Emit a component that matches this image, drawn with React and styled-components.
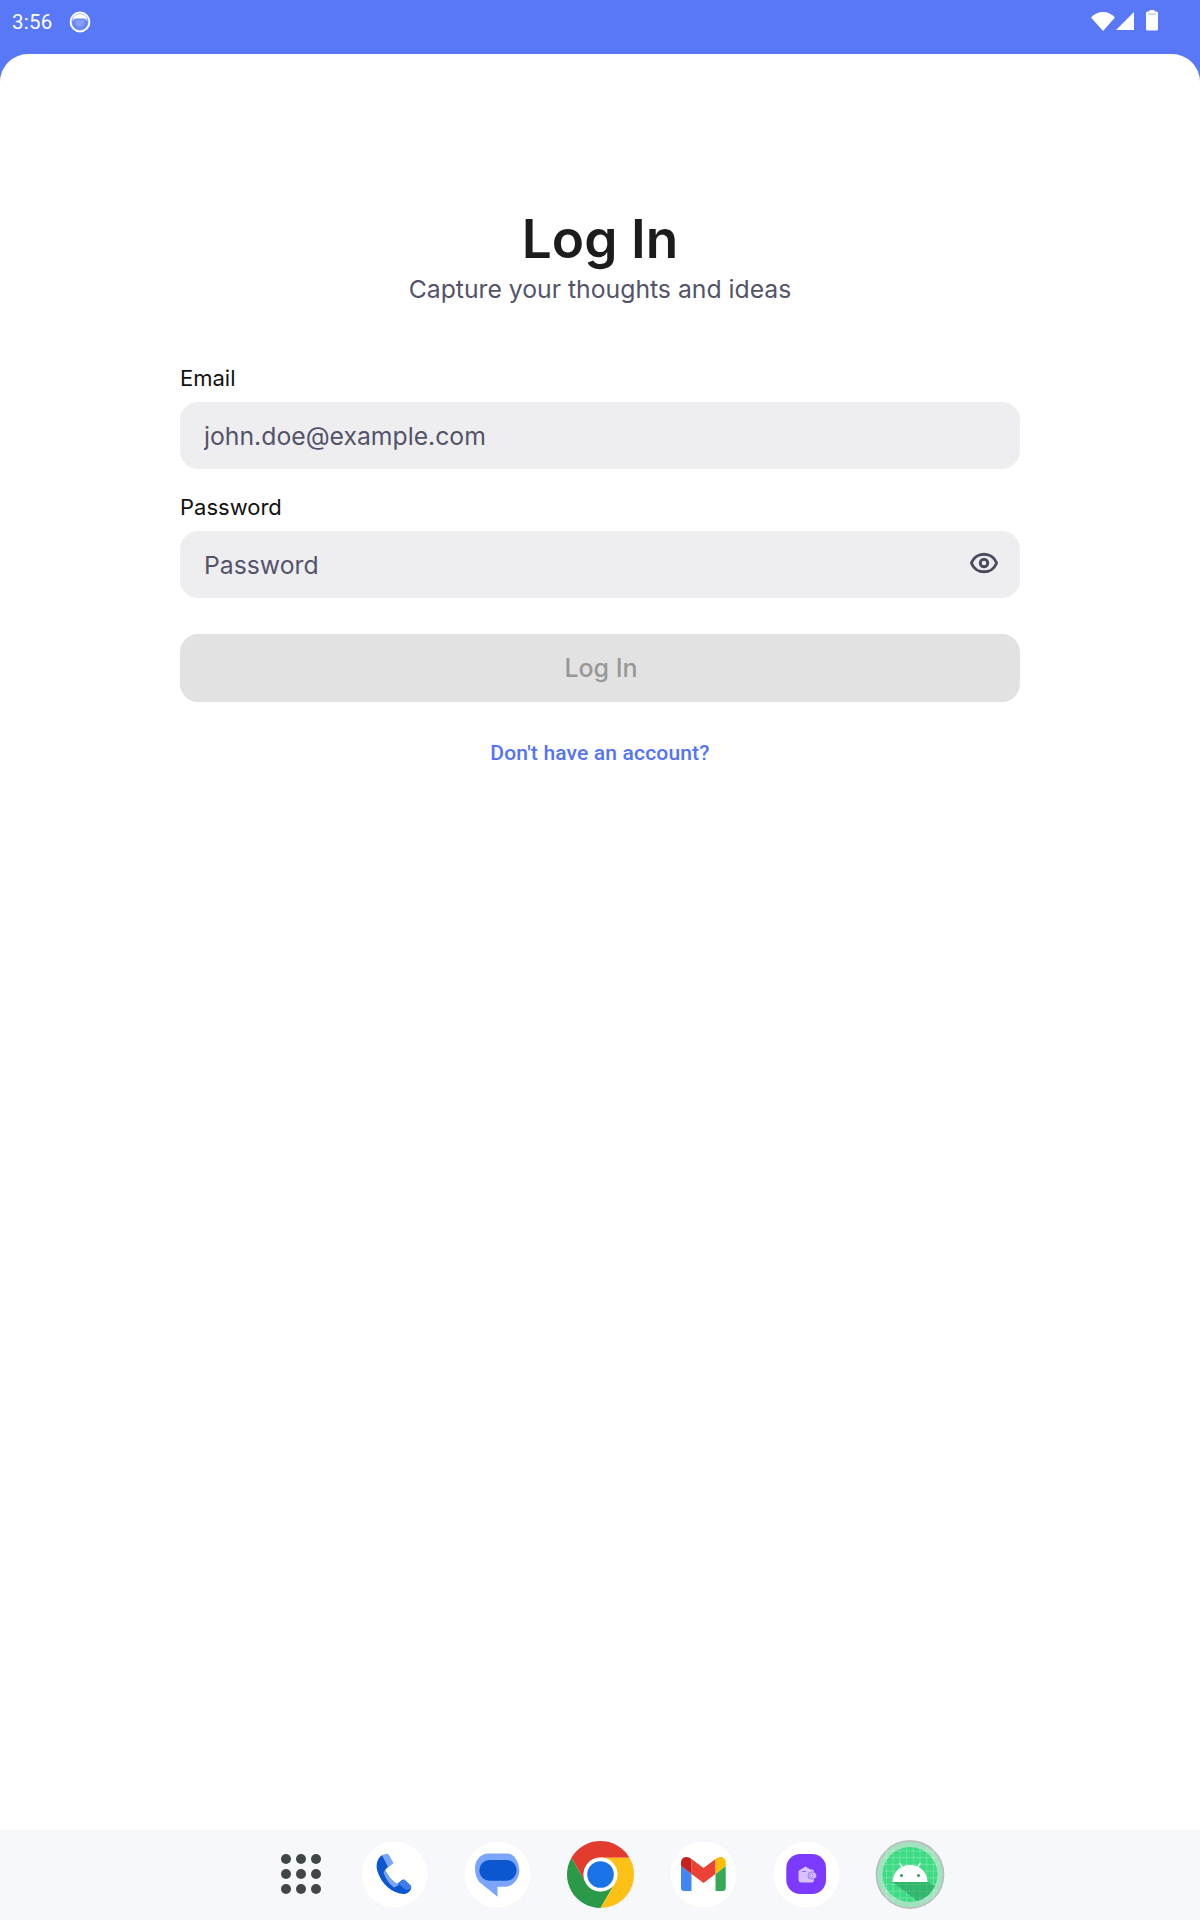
import React from "react";
import styled, { createGlobalStyle } from "styled-components";
import { Eye } from "lucide-react";

const Global = createGlobalStyle`
  html, body { margin: 0; padding: 0; background: #fff; }
  #root { width: 1200px; height: 1920px; }
  * { box-sizing: border-box; }
`;

const Screen = styled.div`
  width: 1200px;
  height: 1920px;
  display: flex;
  flex-direction: column;
  background: #5878f8;
  overflow: hidden;
  font-family: Inter, "Liberation Sans", sans-serif;
`;
const StatusBar = styled.div`
  height: 54px;
  flex: none;
  display: flex;
  align-items: center;
  padding: 0 0 10px 12px;
  color: #fff;
`;
const Time = styled.span`
  font: 400 20.5px/24px Roboto, sans-serif;
  letter-spacing: 0.25px;
`;
const AppNotice = styled.svg`
  width: 22px;
  height: 22px;
  margin-left: 16px;
`;
const StatusIcons = styled.div`
  margin-left: auto;
  margin-right: 42px;
  margin-bottom: 3px;
  height: 21px;
  display: flex;
  align-items: flex-start;
`;
const CellIcon = styled.svg`
  margin-right: 11px;
`;
const Sheet = styled.main`
  flex: 1;
  min-height: 0;
  background: #fff;
  border-radius: 28px 28px 0 0;
  padding: 153px 180px 0;
  display: flex;
  flex-direction: column;
`;
const Title = styled.h1`
  margin: 0;
  text-align: center;
  font-size: 53.2px;
  line-height: 64px;
  font-weight: 600;
  color: #1c1c1c;
`;
const Subtitle = styled.p`
  margin: 0 0 56px;
  text-align: center;
  font-size: 24.75px;
  line-height: 36px;
  color: #53536a;
`;
const Label = styled.label`
  display: block;
  font-size: 22px;
  line-height: 30px;
  color: #111;
  margin-bottom: 9px;
`;
const Field = styled.div`
  position: relative;
  height: 67px;
  border-radius: 18px;
  background: #eeeef0;
  margin-bottom: 23px;
`;
const Input = styled.input`
  width: 100%;
  height: 100%;
  border: 0;
  outline: 0;
  background: transparent;
  padding: 0 24px;
  font: 400 24.75px Inter, sans-serif;
  color: #53536a;
  &::placeholder { color: #53536a; opacity: 1; }
`;
const EyeButton = styled.span`
  position: absolute;
  right: 21px;
  top: 17px;
  display: flex;
  color: #4a4a5e;
`;
const Submit = styled.button`
  margin-top: 13px;
  height: 68px;
  border: 0;
  border-radius: 18px;
  padding: 0 0 0 2px;
  background: #e2e2e2;
  color: #989898;
  font: 500 25px Inter, sans-serif;
`;
const SignUp = styled.a`
  margin-top: 37px;
  text-align: center;
  font: 500 21px/28px Roboto, sans-serif;
  letter-spacing: 0.17px;
  color: #5473f5;
`;
const Dock = styled.nav`
  height: 90px;
  flex: none;
  background: #f7f8fc;
  display: flex;
  justify-content: center;
  align-items: flex-start;
  gap: 36px;
  padding: 11px 0 0 23px;
`;
const AppGrid = styled.svg`
  width: 40px;
  height: 67px;
  margin-right: 4px;
`;
const DockIcon = styled.svg`
  width: 67px;
  height: 67px;
  display: block;
  overflow: visible;
`;

const Plate = () => <circle cx="33.5" cy="33.5" r="33.6" fill="#fff" stroke="#f1f2f6" strokeWidth=".6" />;

export default function App() {
  const dots = [];
  for (let r = 0; r < 3; r++) for (let c = 0; c < 3; c++) dots.push(<circle key={r + "-" + c} cx={5 + c * 15} cy={18 + r * 15} r="5" fill="#414649" />);
  const grid = [];
  for (let i = 0; i < 8; i++) {
    grid.push(<path key={"v" + i} d={`M${10 + i * 6.7} 6V61`} stroke="#fff" strokeOpacity=".3" strokeWidth=".7" />);
    grid.push(<path key={"h" + i} d={`M6 ${10 + i * 6.7}H61`} stroke="#fff" strokeOpacity=".3" strokeWidth=".7" />);
  }
  return (
    <Screen>
      <Global />
      <StatusBar>
        <Time>3:56</Time>
        <AppNotice viewBox="0 0 22 22">
          <circle cx="11" cy="11" r="9.4" fill="#fff" fillOpacity=".12" stroke="#fff" strokeWidth="2" />
          <path d="M3.5 10C4 5.5 7 3 11 3S18 5.5 18.5 10L16 7.5H6Z" fill="#fff" />
          <path d="M6 8L6.8 12C7 15 9 16 11 16S15 15 15.2 12L16 8L14 9H8Z" fill="#fff" fillOpacity=".18" />
        </AppNotice>
        <StatusIcons>
          <svg width="24" height="21" viewBox="0 0 24 21"><path d="M0 7.5C3 4 7.5 2 12 2s9 2 12 5.5L12 21Z" fill="#fff" /></svg>
          <CellIcon width="20" height="21" viewBox="0 0 20 21"><path d="M19 2V20H1Z" fill="#fff" /></CellIcon>
          <svg width="12" height="21" viewBox="0 0 12 21"><path d="M3.5 0H8.5V1.5H10.5A1.5 1.5 0 0 1 12 3V19A1.5 1.5 0 0 1 10.5 20.5H1.5A1.5 1.5 0 0 1 0 19V3A1.5 1.5 0 0 1 1.5 1.5H3.5Z" fill="#fff" /><rect x="2" y="3.5" width="8" height="1" fill="#5878f8" fillOpacity=".6" /></svg>
        </StatusIcons>
      </StatusBar>
      <Sheet>
        <Title>Log In</Title>
        <Subtitle>Capture your thoughts and ideas</Subtitle>
        <Label>Email</Label>
        <Field><Input placeholder="john.doe@example.com" readOnly /></Field>
        <Label>Password</Label>
        <Field>
          <Input placeholder="Password" readOnly />
          <EyeButton><Eye size={30} strokeWidth={2.3} /></EyeButton>
        </Field>
        <Submit disabled>Log In</Submit>
        <SignUp>Don't have an account?</SignUp>
      </Sheet>
      <Dock>
        <AppGrid viewBox="0 0 40 67">{dots}</AppGrid>
        <DockIcon viewBox="0 0 67 67">
          <Plate />
          <path d="M21 14C16 18 14.5 24 16.5 30.5C20.5 43 31 52.5 43 53C46 53 49 50.5 50 48C50.5 46.5 49.5 45 48 44L41 39L36 43C31 40 27 35 24 29L28 25Z" fill="#0b57d0" />
          <path d="M21 14L25 13C26 12.5 27 13 28 14L32 21C32.5 22 32 23 31 23.5L27 26ZM24 29C27 36 32 41 38 44L33 46.5C28 43 24.5 37 22.5 31.5Z" fill="#7ba4ff" />
          <path d="M37 42.5L41 39C42 38 43 38 44 39L49.5 44C50.5 45 50.5 47 49.5 48L45 49Z" fill="#3f7ee8" />
        </DockIcon>
        <DockIcon viewBox="0 0 67 67">
          <Plate />
          <path d="M24 12.5H43C50 12.5 55.3 21 55.3 29.5C55.3 38 49 45.7 41 45.7H33.5V55.7L15 40.7C12.5 37 11 33 11 27C11 19 17 12.5 24 12.5Z" fill="#7ba4ff" />
          <rect x="15.3" y="19" width="37.4" height="20.7" rx="10.3" fill="#0b57d0" />
        </DockIcon>
        <DockIcon viewBox="0 0 48 48">
          <path d="M44.78 12H24A12 12 0 0 0 13.6 30L3.2 12A24 24 0 0 1 44.78 12Z" fill="#e33b2e" />
          <path d="M3.2 12L13.6 30A12 12 0 0 0 34.4 30L24 48A24 24 0 0 1 3.2 12Z" fill="#2a9a48" />
          <path d="M44.78 12H24A12 12 0 0 1 34.4 30L24 48A24 24 0 0 0 44.78 12Z" fill="#fdc015" />
          <circle cx="24" cy="24" r="12.2" fill="#fff" />
          <circle cx="24" cy="24" r="9.5" fill="#1a73e8" />
        </DockIcon>
        <DockIcon viewBox="0 0 67 67">
          <Plate />
          <path d="M11 25L21.5 33V50H14A3 3 0 0 1 11 47Z" fill="#4285f4" />
          <path d="M45.5 33L55.7 25V47A3 3 0 0 1 52.7 50H45.5Z" fill="#34a853" />
          <path d="M21.5 18L33.5 27L45.5 18V33L33.5 42L21.5 33Z" fill="#ea4335" />
          <path d="M11 25V21.5C11 16 17 14 21.5 18V33Z" fill="#c5221f" />
          <path d="M45.5 18C50 14 55.7 16 55.7 21.5V25L45.5 33Z" fill="#fbbc04" />
        </DockIcon>
        <DockIcon viewBox="0 0 67 67">
          <Plate />
          <rect x="13.3" y="13" width="39.7" height="40" rx="14" fill="#7c3aff" />
          <path d="M26 29.5L32.5 25.5L37.5 28.5H39A2 2 0 0 1 41 30.5V39A2.5 2.5 0 0 1 38.5 41.5H28.5A3 3 0 0 1 25.5 38.5V30Z" fill="#d6c3ff" />
          <rect x="35" y="31" width="8.5" height="7" rx="3.5" fill="#d6c3ff" stroke="#7c3aff" strokeWidth=".6" />
          <circle cx="38.5" cy="34.5" r="1.5" fill="#fff" stroke="#7c3aff" strokeWidth=".7" />
          <path d="M29 30.5H33" stroke="#7c3aff" strokeWidth=".7" />
        </DockIcon>
        <DockIcon viewBox="0 0 67 67">
          <circle cx="34" cy="33.5" r="33.6" fill="#a0e3be" stroke="#bcbcbc" strokeWidth="1.6" />
          <g transform="translate(.5 0)">
            <circle cx="33.5" cy="33.5" r="27.5" fill="#3ddc84" />
            {grid}
            <path d="M16 41H51L58.5 45A27.5 27.5 0 0 1 41 60Z" fill="#1f8a50" fillOpacity=".45" />
            <path d="M23 22L27 28M44 22L40 28" stroke="#fff" strokeWidth="1.3" />
            <path d="M16 41C16 31 24 24 33.5 24S51 31 51 41Z" fill="#fff" />
            <circle cx="25" cy="34.5" r="1.5" fill="#2a9a5c" />
            <circle cx="42" cy="34.5" r="1.5" fill="#2a9a5c" />
          </g>
        </DockIcon>
      </Dock>
    </Screen>
  );
}
